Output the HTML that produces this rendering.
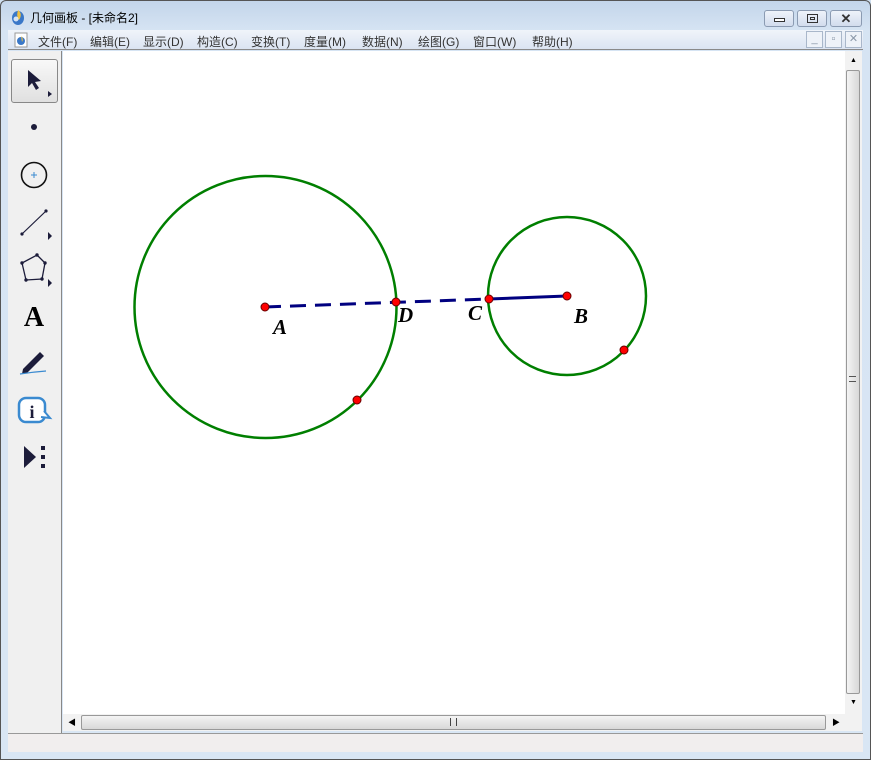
<!DOCTYPE html>
<html><head><meta charset="utf-8"><style>
*{margin:0;padding:0;box-sizing:border-box}
body{width:871px;height:760px;overflow:hidden;background:#cfdff0;font-family:"Liberation Sans","Noto Sans CJK SC",sans-serif;position:relative}
.abs{position:absolute}
#frame{left:0;top:0;width:871px;height:760px;border:1px solid #555;border-radius:6px 6px 0 0;background:linear-gradient(#c3d5ea,#d6e4f3 30px,#d9e6f4)}
#title{left:30px;top:9px;font-size:12px;color:#000}
.wb{top:10px;height:17px;border:1px solid #8b9bb2;border-radius:3px;background:linear-gradient(#eef3fa,#d2dced)}
#menu{left:8px;top:30px;width:855px;height:20px;background:linear-gradient(#f0f4fa,#dbe4f2);border-bottom:1px solid #8a8a8a}
#menu span{position:absolute;top:3px;font-size:12px;color:#333}
.mb{top:31px;width:17px;height:17px;border:1px solid #a9b7ca;background:#eef2f8;font-size:11px;color:#8a97a8;text-align:center;line-height:15px}
#tool{left:8px;top:51px;width:54px;height:682px;background:#f0f0f0;border-right:1px solid #888}
#canvas{left:63px;top:51px;width:782px;height:663px;background:#fff}
#vs{left:845px;top:51px;width:17px;height:663px;background:#f2f2f2}
#hs{left:63px;top:714px;width:799px;height:17px;background:#f2f2f2}
#status{left:8px;top:733px;width:855px;height:19px;background:#f1eeee;border-top:1px solid #999}
</style></head><body>
<div id="frame" class="abs"></div>
<svg class="abs" style="left:10px;top:8px" width="16" height="18"><ellipse cx="8" cy="10" rx="6" ry="7" fill="#3a78c8"/><path d="M8 2 Q13 6 9 12 Q6 9 8 2Z" fill="#f0c040"/><circle cx="6" cy="11" r="2.5" fill="#fff" opacity=".8"/></svg>
<div id="title" class="abs">几何画板 - [未命名2]</div>
<div class="abs wb" style="left:764px;width:30px"><div class="abs" style="left:9px;top:7px;width:11px;height:4px;border:1px solid #333;background:#fff"></div></div>
<div class="abs wb" style="left:797px;width:30px"><div class="abs" style="left:9px;top:3px;width:11px;height:9px;border:1px solid #333"></div><div class="abs" style="left:12px;top:6px;width:5px;height:3px;border:1px solid #333"></div></div>
<div class="abs wb" style="left:830px;width:32px;font-size:13px;font-weight:bold;text-align:center;line-height:15px;color:#333">✕</div>
<div id="menu" class="abs">
<svg class="abs" style="left:6px;top:2px" width="14" height="16"><rect x="1" y="1" width="12" height="14" fill="#fff" stroke="#999"/><circle cx="7" cy="9" r="4" fill="#3a78c8"/><path d="M7 4 Q10 7 8 10Z" fill="#f0c040"/></svg>
<span style="left:30px">文件(F)</span><span style="left:82px">编辑(E)</span><span style="left:135px">显示(D)</span><span style="left:189px">构造(C)</span><span style="left:243px">变换(T)</span><span style="left:296px">度量(M)</span><span style="left:354px">数据(N)</span><span style="left:410px">绘图(G)</span><span style="left:465px">窗口(W)</span><span style="left:524px">帮助(H)</span>
</div>
<div class="abs mb" style="left:806px">_</div><div class="abs mb" style="left:825px">▫</div><div class="abs mb" style="left:845px">✕</div>
<div id="tool" class="abs"></div>
<div class="abs" style="left:11px;top:59px;width:47px;height:44px;border:1px solid #888;border-radius:3px;background:linear-gradient(#f8f8f8,#e0e0e0)"></div>
<svg class="abs" style="left:8px;top:51px" width="54" height="430">
<path d="M20 19 L20 36 L24 32 L28 39 L31 37 L27 31 L33 30 Z" fill="#1c1c3a"/>
<path d="M40 40 L44 43 L40 46Z" fill="#1c1c3a"/>
<circle cx="26" cy="76" r="3" fill="#1c1c3a"/>
<circle cx="26" cy="124" r="12.5" fill="none" stroke="#111" stroke-width="1.6"/>
<path d="M26 121v6M23 124h6" stroke="#3a8ad0" stroke-width="1"/>
<path d="M14 183 L38 160" stroke="#1c1c3a" stroke-width="1.2"/><circle cx="14" cy="183" r="1.6" fill="#1c1c3a"/><circle cx="38" cy="160" r="1.6" fill="#1c1c3a"/>
<path d="M40 181 L44 185 L40 189Z" fill="#1c1c3a"/>
<path d="M29 204 L37 212 L34 228 L18 229 L14 212 Z" fill="none" stroke="#1c1c3a" stroke-width="1.3"/>
<g fill="#1c1c3a"><circle cx="29" cy="204" r="1.7"/><circle cx="37" cy="212" r="1.7"/><circle cx="34" cy="228" r="1.7"/><circle cx="18" cy="229" r="1.7"/><circle cx="14" cy="212" r="1.7"/></g>
<path d="M40 228 L44 232 L40 236Z" fill="#1c1c3a"/>
<text x="26" y="275" text-anchor="middle" font-family="Liberation Serif,serif" font-weight="bold" font-size="28" fill="#000">A</text>
<path d="M15 318 L32 301 L36 305 L19 322 L14 323Z" fill="#1c1c3a"/>
<path d="M12 323 Q25 321 38 320" stroke="#3a8ad0" stroke-width="1.3" fill="none"/>
<rect x="11" y="347" width="26" height="24" rx="7" fill="#fff" stroke="#3a8ad0" stroke-width="2.5"/>
<path d="M36 360 L42 367 L33 366" fill="#fff" stroke="#3a8ad0" stroke-width="2"/>
<text x="24" y="367" text-anchor="middle" font-family="Liberation Serif,serif" font-weight="bold" font-size="18" fill="#1c1c3a">i</text>
<path d="M16 395 L16 417 L28 406Z" fill="#1c1c3a"/>
<rect x="33" y="395" width="4" height="4" fill="#1c1c3a"/><rect x="33" y="404" width="4" height="4" fill="#1c1c3a"/><rect x="33" y="413" width="4" height="4" fill="#1c1c3a"/>
<path d="M0 436 H54" stroke="#888"/>
</svg>
<div id="canvas" class="abs"></div>
<svg class="abs" style="left:0;top:0" width="871" height="760">
<circle cx="265.5" cy="307" r="131" fill="none" stroke="#007f00" stroke-width="2.5"/>
<circle cx="567" cy="296" r="79" fill="none" stroke="#007f00" stroke-width="2.5"/>
<path d="M265 307 L489 299" stroke="#000080" stroke-width="3" stroke-dasharray="16,9"/>
<path d="M489 299 L567 296" stroke="#000080" stroke-width="3"/>
<g fill="#f00" stroke="#600" stroke-width="1"><circle cx="265" cy="307" r="4"/><circle cx="396" cy="302" r="4"/><circle cx="489" cy="299" r="4"/><circle cx="567" cy="296" r="4"/><circle cx="357" cy="400" r="4"/><circle cx="624" cy="350" r="4"/></g>
<g font-family="Liberation Serif,serif" font-style="italic" font-weight="bold" font-size="21" fill="#000"><text x="273" y="334">A</text><text x="398" y="322">D</text><text x="468" y="320">C</text><text x="574" y="323">B</text></g>
</svg>
<div id="vs" class="abs"><div class="abs" style="left:1px;top:19px;width:14px;height:624px;border:1px solid #999;border-radius:2px;background:linear-gradient(90deg,#f4f4f4,#d8d8d8)"></div><div class="abs" style="left:5px;top:6px;font-size:7px">▲</div><div class="abs" style="left:5px;top:648px;font-size:7px">▼</div><div class="abs" style="left:4px;top:325px;width:7px;height:6px;border-top:1px solid #555;border-bottom:1px solid #555"></div></div>
<div id="hs" class="abs"><div class="abs" style="left:18px;top:1px;width:745px;height:15px;border:1px solid #999;border-radius:2px;background:linear-gradient(#f4f4f4,#d8d8d8)"></div><div class="abs" style="left:5px;top:3px;font-size:8px">◀</div><div class="abs" style="left:769px;top:3px;font-size:8px">▶</div><div class="abs" style="left:387px;top:4px;width:7px;height:8px;border-left:1px solid #444;border-right:1px solid #444"></div></div>
<div id="status" class="abs"></div>
</body></html>
